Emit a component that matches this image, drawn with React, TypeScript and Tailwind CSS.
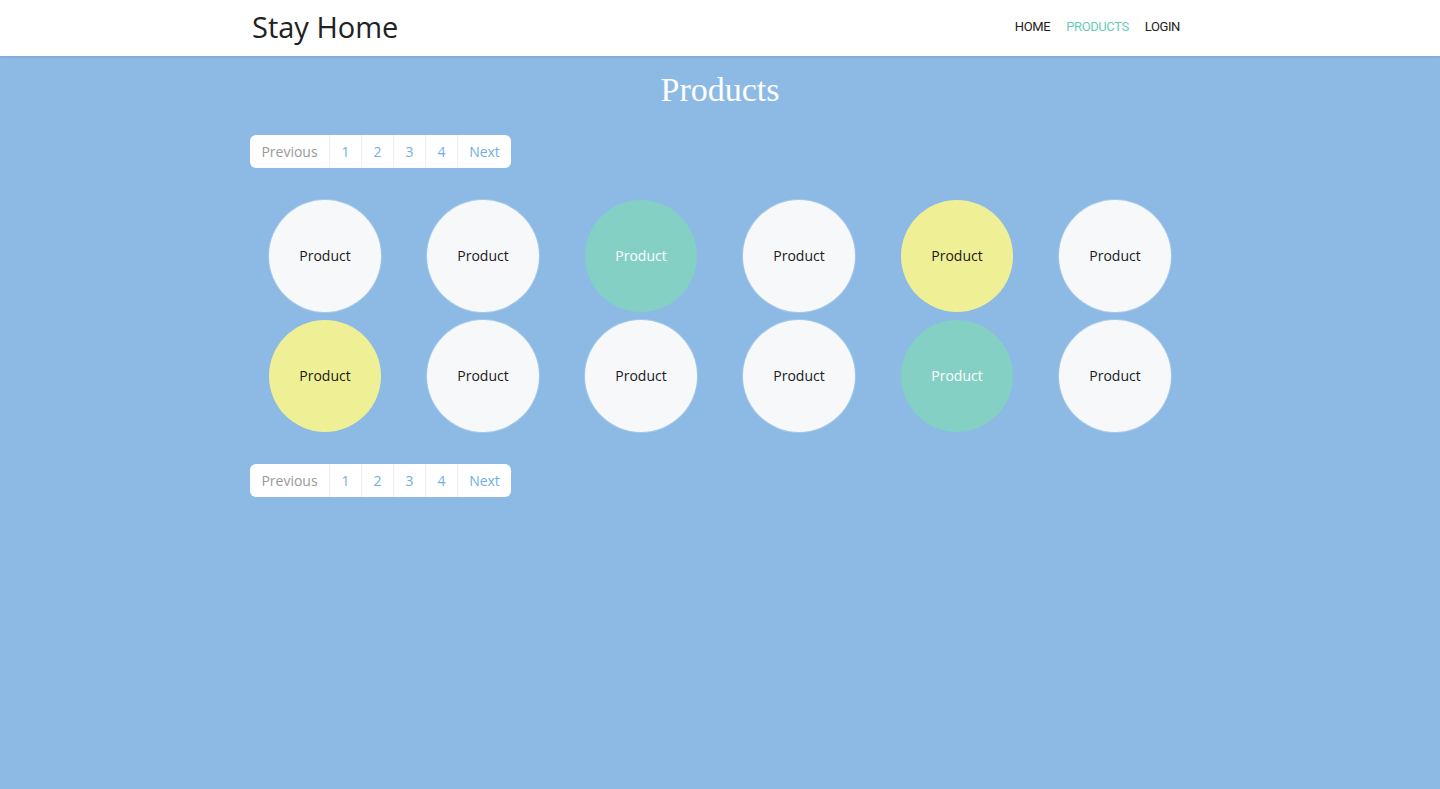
import React from "react";

const colors = [
  ["w", "w", "t", "w", "y", "w"],
  ["y", "w", "w", "w", "t", "w"],
];

function Pager() {
  const cell = "h-full flex items-center justify-center border-l border-[#eceff2]";
  return (
    <div className="flex h-[33px] w-[261px] bg-white rounded-[6px] text-[14px] overflow-hidden" style={{ fontFamily: '"Open Sans", sans-serif' }}>
      <div className="h-full w-[79px] flex items-center justify-center text-[#9a9a9a]">Previous</div>
      {["1", "2", "3", "4"].map((n) => (
        <div key={n} className={`${cell} w-[32px] text-[#6fb0e3]`}>{n}</div>
      ))}
      <div className={`${cell} flex-1 text-[#6fb0e3]`}>Next</div>
    </div>
  );
}

function Circle({ c }: { c: string }) {
  const cls =
    c === "t"
      ? "bg-[#84d0c4] text-white"
      : c === "y"
      ? "bg-[#eff096] text-[#1a1a1a]"
      : "bg-[#f7f8fa] text-[#1a1a1a] shadow-[0_0_0_1px_rgba(255,255,255,0.2)]";
  return (
    <div className="w-[158px] flex justify-center">
      <div className={`w-[112px] h-[112px] rounded-full flex items-center justify-center text-[14px] pb-[2px] ${cls}`}>
        Product
      </div>
    </div>
  );
}

export default function App() {
  return (
    <div className="min-h-[789px] bg-[#8cbae5]" style={{ fontFamily: '"Open Sans", sans-serif' }}>
      <header className="h-[56px] bg-white shadow-[0_1px_3px_rgba(0,0,0,0.12)] relative z-10">
        <div className="w-[960px] mx-auto h-full flex items-center justify-between px-[12px]">
          <div className="text-[29px] text-[#222] leading-none -mt-[3px]">Stay Home</div>
          <nav className="flex gap-[16px] text-[13px] tracking-[-0.4px] mr-[8px] -mt-[3px]" style={{ fontFamily: 'Roboto, "Liberation Sans", sans-serif' }}>
            <span className="text-[#222]">HOME</span>
            <span className="text-[#6ccbb7]">PRODUCTS</span>
            <span className="text-[#222]">LOGIN</span>
          </nav>
        </div>
      </header>
      <main className="w-[960px] mx-auto">
        <h1 className="text-center text-white text-[34px] pt-[15px] leading-[38px]" style={{ fontFamily: '"Liberation Serif", serif' }}>
          Products
        </h1>
        <div className="pl-[10px] mt-[26px]">
          <Pager />
        </div>
        <div className="pl-[6px] mt-[32px] flex flex-col gap-[8px]">
          {colors.map((row, i) => (
            <div key={i} className="flex">
              {row.map((c, j) => (
                <Circle key={j} c={c} />
              ))}
            </div>
          ))}
        </div>
        <div className="pl-[10px] mt-[32px]">
          <Pager />
        </div>
      </main>
    </div>
  );
}
